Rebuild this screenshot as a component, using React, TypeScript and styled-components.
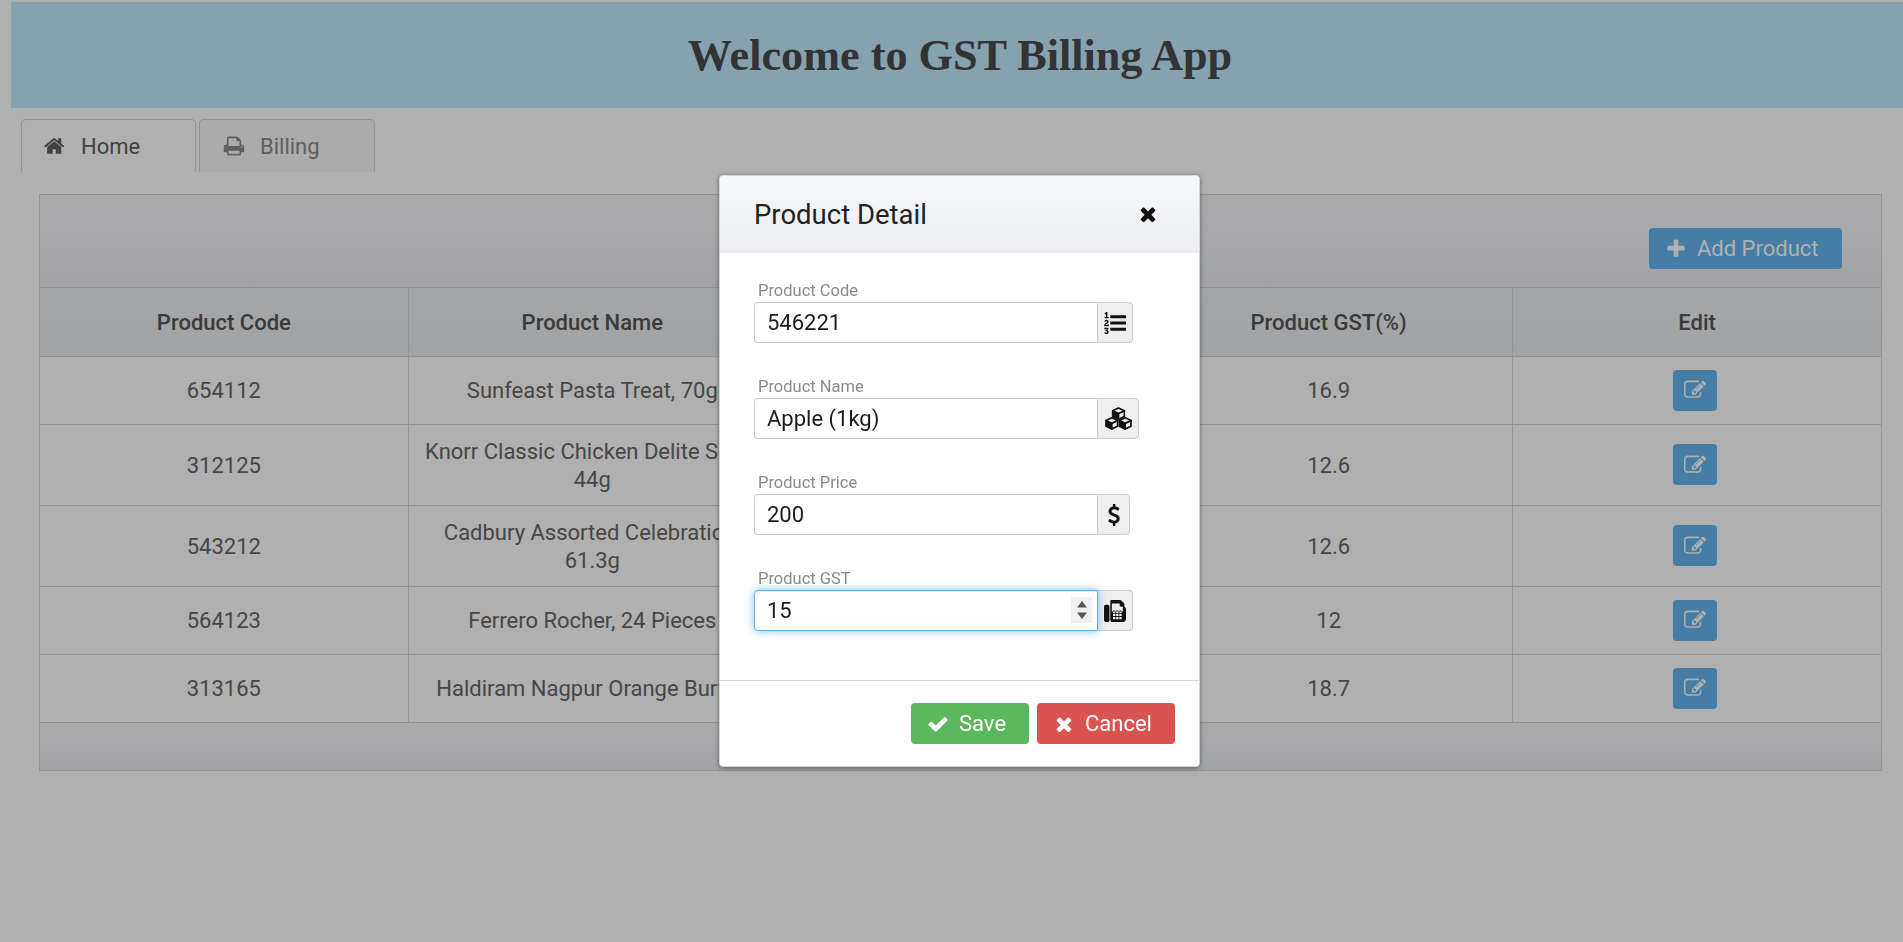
import React from "react";
import styled, { createGlobalStyle } from "styled-components";

const Global = createGlobalStyle`
  html, body { margin: 0; padding: 0; background: #fff; }
  body { font-family: Roboto, "Liberation Sans", sans-serif; color: #555; overflow: hidden; }
  * { box-sizing: border-box; }
`;

const ICONS: Record<string, { box: number; d: string }> = {
  home: { box: 1792, d: "M1408 992v480q0 26-19 45t-45 19h-384v-384h-256v384h-384q-26 0-45-19t-19-45v-480q0-1 .5-3t.5-3l575-474 575 474q1 2 1 6zm223-69l-62 74q-8 9-21 11h-3q-13 0-21-7l-692-577-692 577q-12 8-24 7-13-2-21-11l-62-74q-8-10-7-23.500t11-21.500l719-599q32-26 76-26t76 26l244 204v-195q0-14 9-23t23-9h192q14 0 23 9t9 23v408l219 182q10 8 11 21.500t-7 23.500z" },
  print: { box: 1792, d: "M448 1536h896v-256h-896v256zm0-640h896v-384h-160q-40 0-68-28t-28-68v-160h-640v640zm1152 64q0-26-19-45t-45-19-45 19-19 45 19 45 45 19 45-19 19-45zm128 0v416q0 13-9.500 22.500t-22.500 9.500h-224v160q0 40-28 68t-68 28h-960q-40 0-68-28t-28-68v-160h-224q-13 0-22.500-9.500t-9.500-22.500v-416q0-79 56.500-135.500t135.500-56.500h64v-544q0-40 28-68t68-28h672q40 0 88 20t76 48l152 152q28 28 48 76t20 88v256h64q79 0 135.500 56.500t56.500 135.500z" },
  times: { box: 1792, d: "M1490 1322q0 40-28 68l-136 136q-28 28-68 28t-68-28l-294-294-294 294q-28 28-68 28t-68-28l-136-136q-28-28-28-68t28-68l294-294-294-294q-28-28-28-68t28-68l136-136q28-28 68-28t68 28l294 294 294-294q28-28 68-28t68 28l136 136q28 28 28 68t-28 68l-294 294 294 294q28 28 28 68z" },
  check: { box: 1792, d: "M1671 566q0 40-28 68l-724 724-136 136q-28 28-68 28t-68-28l-136-136-362-362q-28-28-28-68t28-68l136-136q28-28 68-28t68 28l294 295 656-657q28-28 68-28t68 28l136 136q28 28 28 68z" },
  plus: { box: 1792, d: "M1600 736v192q0 40-28 68t-68 28h-416v416q0 40-28 68t-68 28h-192q-40 0-68-28t-28-68v-416h-416q-40 0-68-28t-28-68v-192q0-40 28-68t68-28h416v-416q0-40 28-68t68-28h192q40 0 68 28t28 68v416h416q40 0 68 28t28 68z" },
  edit: { box: 1792, d: "M888 1184l116-116-152-152-116 116v56h96v96h56zm440-720q-16-16-33 1l-350 350q-17 17-1 33t33-1l350-350q17-17 1-33zm80 594v190q0 119-84.500 203.500t-203.500 84.500h-832q-119 0-203.500-84.500t-84.500-203.500v-832q0-119 84.500-203.500t203.500-84.500h832q63 0 117 25 15 7 18 23 3 17-9 29l-49 49q-14 14-32 8-23-6-45-6h-832q-66 0-113 47t-47 113v832q0 66 47 113t113 47h832q66 0 113-47t47-113v-126q0-13 9-22l64-64q15-15 35-9t20 29zm-96-738l288 288-672 672h-288v-288zm444 132l-92 92-288-288 92-92q28-28 68-28t68 28l152 152q28 28 28 68t-28 68z" },
  list: { box: 1792, d: "M381 1620q0 80-54.500 126t-135.500 46q-106 0-172-66l57-88q49 45 106 45 29 0 50.500-14.500t21.500-42.500q0-64-105-56l-26-56q8-10 32.500-43.500t42.500-54 37-38.500v-1q-16 0-48.500 1t-48.500 1v53h-106v-152h333v88l-95 115q51 12 81 49t30 88zm2-627v159h-362q-6-36-6-54 0-51 23.500-93t56.500-68 66-47.500 56.500-43.500 23.500-45q0-25-14.500-38.500t-39.500-13.500q-46 0-81 58l-85-59q24-51 71.500-79.500t105.500-28.500q73 0 123 41.500t50 112.500q0 50-34 91.500t-75 64.500-75.500 50.500-35.500 52.500h127v-60h105zm1409 319v192q0 13-9.500 22.500t-22.500 9.500h-1216q-13 0-22.500-9.500t-9.500-22.500v-192q0-14 9-23t23-9h1216q13 0 22.500 9.500t9.500 22.500zm-1408-899v99h-335v-99h107q0-41 .5-122t.5-121v-12h-2q-8 17-50 54l-71-76 136-127h106v404h108zm1408 387v192q0 13-9.500 22.500t-22.500 9.500h-1216q-13 0-22.500-9.500t-9.500-22.500v-192q0-14 9-23t23-9h1216q13 0 22.500 9.500t9.500 22.500zm0-512v192q0 13-9.500 22.500t-22.500 9.500h-1216q-13 0-22.500-9.500t-9.500-22.500v-192q0-13 9.500-22.500t22.500-9.500h1216q13 0 22.500 9.500t9.500 22.500z" },
  usd: { box: 1792, d: "M1362 1185q0 153-99.500 263.500t-258.500 136.500v175q0 14-9 23t-23 9h-135q-13 0-22.500-9.500t-9.500-22.500v-175q-66-9-127.500-31t-101.500-44.500-74-48-46.500-37.500-17.500-18q-17-21-2-41l103-135q7-10 23-12 15-2 24 9l2 2q113 99 243 125 37 8 74 8 81 0 142.500-43t61.500-122q0-28-15-53t-33.500-42-58.500-37.500-66-32-80-32.500q-39-16-61.500-25t-61.500-26.500-62.500-31-56.500-35.500-53.500-42.500-43.500-49-35.500-58-21-66.500-8.500-78q0-138 98-242t255-134v-180q0-13 9.500-22.500t22.500-9.500h135q14 0 23 9t9 23v176q57 6 110.500 23t87 33.500 63.500 37.500 39 29 15 14q17 18 5 38l-81 146q-8 15-23 16-14 3-27-7-3-3-14.500-12t-39-26.500-58.500-32-74.500-26-85.500-11.500q-95 0-155 43t-60 111q0 26 8.500 48t29.500 41.500 39.500 33 56 31 60.500 27 70 27.500q53 20 81 31.500t76 35 75.500 42.500 62 50 53 63.500 31.500 76.500 13 94z" },
  fax: { box: 1792, d: "M288 384q66 0 113 47t47 113v1088q0 66-47 113t-113 47h-128q-66 0-113-47t-47-113v-1088q0-66 47-113t113-47h128zm1376 163q58 34 93 93t35 128v768q0 106-75 181t-181 75h-864q-66 0-113-47t-47-113v-1536q0-40 28-68t68-28h672q40 0 88 20t76 48l152 152q28 28 48 76t20 88v163zm-736 989v-128q0-14-9-23t-23-9h-128q-14 0-23 9t-9 23v128q0 14 9 23t23 9h128q14 0 23-9t9-23zm0-256v-128q0-14-9-23t-23-9h-128q-14 0-23 9t-9 23v128q0 14 9 23t23 9h128q14 0 23-9t9-23zm0-256v-128q0-14-9-23t-23-9h-128q-14 0-23 9t-9 23v128q0 14 9 23t23 9h128q14 0 23-9t9-23zm256 512v-128q0-14-9-23t-23-9h-128q-14 0-23 9t-9 23v128q0 14 9 23t23 9h128q14 0 23-9t9-23zm0-256v-128q0-14-9-23t-23-9h-128q-14 0-23 9t-9 23v128q0 14 9 23t23 9h128q14 0 23-9t9-23zm0-256v-128q0-14-9-23t-23-9h-128q-14 0-23 9t-9 23v128q0 14 9 23t23 9h128q14 0 23-9t9-23zm256 512v-128q0-14-9-23t-23-9h-128q-14 0-23 9t-9 23v128q0 14 9 23t23 9h128q14 0 23-9t9-23zm0-256v-128q0-14-9-23t-23-9h-128q-14 0-23 9t-9 23v128q0 14 9 23t23 9h128q14 0 23-9t9-23zm0-256v-128q0-14-9-23t-23-9h-128q-14 0-23 9t-9 23v128q0 14 9 23t23 9h128q14 0 23-9t9-23zm96-384v-96h-160q-40 0-68-28t-28-68v-160h-640v640h896z" },
};

const Glyph = styled.svg<{ $size: number }>`
  height: ${(p) => p.$size}px;
  width: auto;
  fill: currentColor;
  flex: none;
  display: block;
`;

const CubesGlyph = styled.svg`
  width: 27px;
  height: 23px;
  flex: none;
  display: block;
  stroke: currentColor;
  stroke-width: 1.7;
  stroke-linejoin: round;
`;

const CubeLeftFace = styled.polygon`
  fill: currentColor;
`;

const CubeLightFace = styled.polygon`
  fill: #eee;
`;

const Cube = ({ x, y }: { x: number; y: number }) => (
  <g transform={`translate(${x} ${y})`}>
    <CubeLeftFace points="-5.800,2.800 0,5.500 0,11.200 -5.800,8.500" />
    <CubeLightFace points="0,5.500 5.800,2.800 5.800,8.500 0,11.200" />
    <CubeLightFace points="0,0 5.800,2.800 0,5.500 -5.800,2.800" />
  </g>
);

const CubesIcon = () => (
  <CubesGlyph viewBox="0 0 27 23" aria-hidden="true">
    <Cube x={13.5} y={1} />
    <Cube x={6.800} y={10.800} />
    <Cube x={20.200} y={10.800} />
  </CubesGlyph>
);

const Icon = ({ name, size }: { name: string; size: number }) =>
  name === "cubes" ? (
    <CubesIcon />
  ) : (
    <Glyph $size={size} viewBox={`0 0 ${ICONS[name].box} 1792`} aria-hidden="true">
      <path d={ICONS[name].d} />
    </Glyph>
  );

const Page = styled.div`
  min-height: 942px;
  padding: 2px 0 0 11px;
`;

const Banner = styled.header`
  height: 106px;
  padding-left: 6px;
  background: #c1ebfc;
  display: flex;
  align-items: center;
  justify-content: center;
`;

const Heading = styled.h1`
  margin: 0;
  font-family: "Liberation Serif", "Times New Roman", serif;
  font-size: 44.2px;
  font-weight: 700;
  color: #4a4a4a;
`;

const TabStrip = styled.nav`
  display: flex;
  gap: 3px;
  margin: 11px 0 0 10px;
  height: 53px;
`;

const Tab = styled.div<{ $active?: boolean }>`
  width: ${(p) => (p.$active ? 175 : 176)}px;
  display: flex;
  align-items: center;
  gap: 15px;
  padding: 0 0 0 ${(p) => (p.$active ? 22 : 23)}px;
  font-size: 22px;
  border: 1px solid #d5d5d5;
  border-bottom: none;
  border-radius: 5px 5px 0 0;
  background: ${(p) => (p.$active ? "#fff" : "#f8f8f8")};
  color: ${(p) => (p.$active ? "#5f5f5f" : "#8a8a8a")};
`;

const Panel = styled.section`
  margin: 22px 21px 0 28px;
  border: 1px solid #d5d5d5;
`;

const Toolbar = styled.div`
  height: 93px;
  background: linear-gradient(#f6f7f9, #ebedf0);
  border-bottom: 1px solid #d5d5d5;
  display: flex;
  justify-content: flex-end;
  align-items: flex-start;
  padding: 33px 39px 0 0;
`;

const AddButton = styled.button`
  height: 41px;
  width: 193px;
  border: none;
  border-radius: 4px;
  background: #64b5ee;
  color: #fff;
  font: 400 22px Roboto, sans-serif;
  display: flex;
  align-items: center;
  gap: 10px;
  padding: 0 0 0 16px;
`;

const Table = styled.table`
  width: 100%;
  table-layout: fixed;
  border-collapse: collapse;
  text-align: center;
  font-size: 22px;
  line-height: 28px;
`;

const HeadRow = styled.tr`
  height: 68px;
  background: linear-gradient(#eef0f2, #ebedf0);
  border-bottom: 1px solid #d5d5d5;
`;

const HeadCell = styled.th`
  font-weight: 500;
  color: #555;
  padding: 2px 16px 0;
  border-right: 1px solid #d5d5d5;
  &:last-child { border-right: none; }
`;

const Row = styled.tr<{ $tall?: boolean }>`
  height: ${(p) => (p.$tall ? 81 : 68)}px;
  border-bottom: 1px solid #d5d5d5;
  &:last-child { border-bottom: none; }
`;

const Cell = styled.td`
  padding: 2px 16px 0;
  color: #666;
  border-right: 1px solid #d5d5d5;
  &:last-child { border-right: none; }
`;

const EditButton = styled.button`
  width: 44px;
  height: 41px;
  margin: -2px 4px 0 0;
  padding: 0;
  border: none;
  border-radius: 4px;
  background: #64b5ee;
  color: #fff;
  display: inline-flex;
  align-items: center;
  justify-content: center;
  vertical-align: middle;
`;

const PanelFooter = styled.div`
  height: 48px;
  border-top: 1px solid #d5d5d5;
  background: linear-gradient(#f6f7f9, #ebedf0);
`;

const Overlay = styled.div`
  position: fixed;
  inset: 0;
  background: rgba(0, 0, 0, 0.31);
`;

const Modal = styled.div`
  position: fixed;
  left: 719px;
  top: 175px;
  width: 481px;
  height: 592px;
  display: flex;
  flex-direction: column;
  background: #fff;
  border: 1px solid #d5d5d5;
  border-radius: 4px;
  box-shadow: 0 1px 5px rgba(0, 0, 0, 0.45);
`;

const ModalHead = styled.div`
  height: 77px;
  flex: none;
  display: flex;
  align-items: center;
  justify-content: space-between;
  padding: 0 40px 0 34px;
  background: linear-gradient(#f6f7f9, #ebedf0);
  border-radius: 3px 3px 0 0;
`;

const ModalTitle = styled.h2`
  margin: 0;
  font-size: 27.5px;
  font-weight: 400;
  color: #222;
`;

const CloseMark = styled.span`
  color: #111;
  display: block;
  margin-bottom: 2px;
`;

const ModalBody = styled.div`
  flex: 1;
  padding: 25px 0 0 34px;
  display: flex;
  flex-direction: column;
  gap: 31px;
`;

const Field = styled.div`
  height: 65px;
`;

const FieldLabel = styled.label`
  display: block;
  height: 24px;
  padding: 2px 0 0 4px;
  font-size: 16.5px;
  line-height: 22px;
  color: #8a8a8a;
`;

const FieldRow = styled.div`
  display: flex;
  height: 41px;
  position: relative;
`;

const FieldInput = styled.input<{ $focused?: boolean }>`
  width: ${(p) => (p.$focused ? 344 : 343)}px;
  height: 41px;
  padding: 0 4px 0 12px;
  font: 400 22px Roboto, sans-serif;
  color: #1c1c1c;
  background: #fff;
  outline: none;
  border: 1px solid ${(p) => (p.$focused ? "#66afe9" : "#ccc")};
  border-right: ${(p) => (p.$focused ? "1px solid #66afe9" : "none")};
  border-radius: 4px 0 0 4px;
  box-shadow: ${(p) => (p.$focused ? "0 0 8px rgba(102,175,233,.8), inset 0 1px 1px rgba(0,0,0,.075)" : "none")};
  position: relative;
  z-index: ${(p) => (p.$focused ? 1 : 0)};
`;

const SpinBox = styled.span`
  position: absolute;
  z-index: 2;
  left: 317px;
  top: 7px;
  width: 21px;
  height: 26px;
  background: #f0f0f0;
  color: #555;
  display: flex;
  align-items: center;
  justify-content: center;
`;

const Addon = styled.span<{ $width: number; $focused?: boolean }>`
  width: ${(p) => p.$width}px;
  display: flex;
  align-items: center;
  justify-content: center;
  border: 1px solid #ccc;
  border-left: ${(p) => (p.$focused ? "none" : "1px solid #ccc")};
  border-radius: 0 4px 4px 0;
  background: #eee;
  color: #111;
`;

const ModalFooter = styled.div`
  flex: none;
  height: 86px;
  border-top: 1px solid #d5d5d5;
  display: flex;
  justify-content: flex-end;
  gap: 8px;
  padding: 22px 24px 0 0;
`;

const ActionButton = styled.button<{ $tone: string; $width: number }>`
  height: 41px;
  width: ${(p) => p.$width}px;
  border: none;
  border-radius: 4px;
  background: ${(p) => p.$tone};
  color: #fff;
  font: 400 22px Roboto, sans-serif;
  display: flex;
  align-items: center;
  gap: 10px;
  padding: 0 0 0 16px;
`;

const products = [
  { code: "654112", name: "Sunfeast Pasta Treat, 70g", price: "49.5", gst: "16.9" },
  { code: "312125", name: "Knorr Classic Chicken Delite Soup, 44g", price: "55", gst: "12.6", tall: true },
  { code: "543212", name: "Cadbury Assorted Celebration, 61.3g", price: "95", gst: "12.6", tall: true },
  { code: "564123", name: "Ferrero Rocher, 24 Pieces", price: "750", gst: "12" },
  { code: "313165", name: "Haldiram Nagpur Orange Burfee", price: "120", gst: "18.7" },
];

const fields = [
  { label: "Product Code", value: "546221", icon: "list", width: 36 },
  { label: "Product Name", value: "Apple (1kg)", icon: "cubes", width: 42 },
  { label: "Product Price", value: "200", icon: "usd", width: 33 },
];

export default function App() {
  return (
    <>
      <Global />
      <Page>
        <Banner>
          <Heading>Welcome to GST Billing App</Heading>
        </Banner>
        <TabStrip>
          <Tab $active>
            <Icon name="home" size={22} />
            Home
          </Tab>
          <Tab>
            <Icon name="print" size={22} />
            Billing
          </Tab>
        </TabStrip>
        <Panel>
          <Toolbar>
            <AddButton>
              <Icon name="plus" size={22} />
              Add Product
            </AddButton>
          </Toolbar>
          <Table>
            <thead>
              <HeadRow>
                <HeadCell>Product Code</HeadCell>
                <HeadCell>Product Name</HeadCell>
                <HeadCell>Product Price</HeadCell>
                <HeadCell>Product GST(%)</HeadCell>
                <HeadCell>Edit</HeadCell>
              </HeadRow>
            </thead>
            <tbody>
              {products.map((p) => (
                <Row key={p.code} $tall={p.tall}>
                  <Cell>{p.code}</Cell>
                  <Cell>{p.name}</Cell>
                  <Cell>{p.price}</Cell>
                  <Cell>{p.gst}</Cell>
                  <Cell>
                    <EditButton aria-label="Edit">
                      <Icon name="edit" size={22} />
                    </EditButton>
                  </Cell>
                </Row>
              ))}
            </tbody>
          </Table>
          <PanelFooter />
        </Panel>
      </Page>
      <Overlay />
      <Modal>
        <ModalHead>
          <ModalTitle>Product Detail</ModalTitle>
          <CloseMark>
            <Icon name="times" size={22} />
          </CloseMark>
        </ModalHead>
        <ModalBody>
          {fields.map((f) => (
            <Field key={f.label}>
              <FieldLabel>{f.label}</FieldLabel>
              <FieldRow>
                <FieldInput readOnly value={f.value} />
                <Addon $width={f.width}>
                  <Icon name={f.icon} size={22} />
                </Addon>
              </FieldRow>
            </Field>
          ))}
          <Field>
            <FieldLabel>Product GST</FieldLabel>
            <FieldRow>
              <FieldInput $focused readOnly value="15" />
              <SpinBox>
                <svg width="10" height="18" viewBox="0 0 10 18" fill="currentColor" aria-hidden="true">
                  <path d="M5 0 L10 6.500 H0 Z M0 11.500 H10 L5 18 Z" />
                </svg>
              </SpinBox>
              <Addon $width={35} $focused>
                <Icon name="fax" size={22} />
              </Addon>
            </FieldRow>
          </Field>
        </ModalBody>
        <ModalFooter>
          <ActionButton $tone="#5cb85c" $width={118}>
            <Icon name="check" size={22} />
            Save
          </ActionButton>
          <ActionButton $tone="#d9534f" $width={138}>
            <Icon name="times" size={22} />
            Cancel
          </ActionButton>
        </ModalFooter>
      </Modal>
    </>
  );
}
